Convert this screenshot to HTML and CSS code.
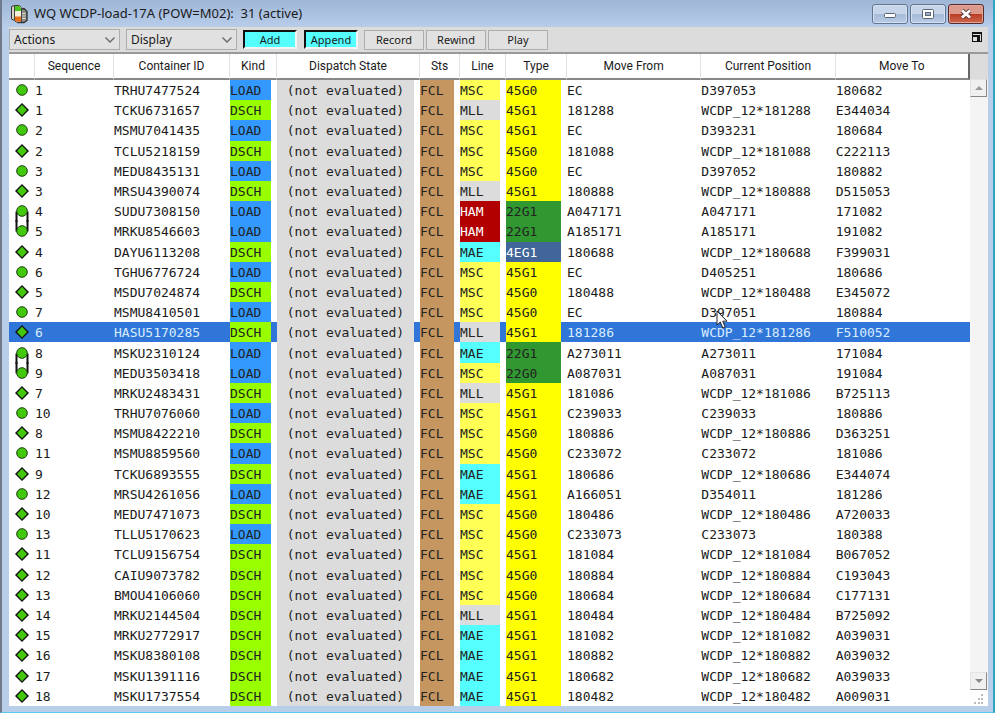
FILE: index.html
```html
<!DOCTYPE html>
<html lang="en">
<head>
    <meta charset="UTF-8">
    <meta name="viewport" content="width=device-width, initial-scale=1.0">
    <title>WQ WCDP-load-17A</title>
    <link rel="stylesheet" href="styles.css">
</head>
<body>
    <div class="window">
        <header class="titlebar">
            <svg class="app-icon" width="18" height="20" viewBox="0 0 18 20">
                <path d="M1.500 2.500l3-1v15l-3-1.500z" fill="#d8d6c8" stroke="#333"/>
                <path d="M9 5.500l5-1 3 3v9L14 18.500H8z" fill="#8f8f88" stroke="#333" stroke-width="1.400"/>
                <path d="M11.500 9.500h4M11.500 12h4M11.500 14.500h4" stroke="#d8d8d0"/>
                <path d="M4.500 1.500h5l2 2V18H6l-1.500-1.500z" fill="#f4f0dc" stroke="#444"/>
                <path d="M5 2h4.500l1.500 2v3H5z" fill="#4ec421"/>
                <path d="M5 12.500h6v5H6l-1-1z" fill="#e8701a"/>
            </svg>
            <h1>WQ WCDP-load-17A (POW=M02):&nbsp; 31 (active)</h1>
            <div class="window-buttons">
                <button type="button" class="win-btn" aria-label="Minimize">
                    <svg width="14" height="12" viewBox="0 0 14 12"><rect x="1.500" y="5.500" width="11" height="4" rx="1" fill="#fff" stroke="#5a6472"/></svg>
                </button>
                <button type="button" class="win-btn" aria-label="Maximize">
                    <svg width="14" height="12" viewBox="0 0 14 12"><rect x="1.500" y="1.500" width="11" height="9" rx="1" fill="#fff" stroke="#5a6472"/><rect x="4.500" y="4.500" width="5" height="3" fill="#9fb4cf" stroke="#5a6472"/></svg>
                </button>
                <button type="button" class="win-btn win-close" aria-label="Close">
                    <svg width="14" height="12" viewBox="0 0 14 12"><path d="M3 2.500l8 7M11 2.500l-8 7" stroke="#5c3a3a" stroke-width="4.500"/><path d="M3 2.500l8 7M11 2.500l-8 7" stroke="#fff" stroke-width="2.800"/></svg>
                </button>
            </div>
        </header>

        <div class="client">
            <div class="toolbar">
                <div class="dropdown">
                    <select aria-label="Actions"><option>Actions</option></select>
                    <svg width="10" height="6" viewBox="0 0 10 6"><path d="M.5.5L5 5 9.500.5" fill="none" stroke="#666" stroke-width="1.300"/></svg>
                </div>
                <div class="dropdown">
                    <select aria-label="Display"><option>Display</option></select>
                    <svg width="10" height="6" viewBox="0 0 10 6"><path d="M.5.5L5 5 9.500.5" fill="none" stroke="#666" stroke-width="1.300"/></svg>
                </div>
                <div class="toggles">
                    <button type="button" class="toggle" aria-pressed="true">Add</button>
                    <button type="button" class="toggle" aria-pressed="true">Append</button>
                </div>
                <div class="commands">
                    <button type="button" class="command">Record</button>
                    <button type="button" class="command">Rewind</button>
                    <button type="button" class="command">Play</button>
                </div>
                <button type="button" class="restore" aria-label="Restore pane">
                    <svg width="10" height="10" viewBox="0 0 10 10"><path d="M0 0h10v10H0z" fill="#111"/><path d="M1 2.500h7.500V9" fill="none" stroke="#ddd"/><path d="M1 5h4v4H1z" fill="#ddd"/></svg>
                </button>
            </div>

            <div class="list">
                <table class="queue">
                    <colgroup>
                        <col class="col-mark">
                        <col class="col-seq">
                        <col class="col-id">
                        <col class="col-kind">
                        <col class="col-state">
                        <col class="col-sts">
                        <col class="col-line">
                        <col class="col-type">
                        <col><col><col>
                    </colgroup>
                    <thead>
                        <tr>
                            <th></th>
                            <th>Sequence</th>
                            <th>Container ID</th>
                            <th>Kind</th>
                            <th>Dispatch State</th>
                            <th>Sts</th>
                            <th>Line</th>
                            <th>Type</th>
                            <th>Move From</th>
                            <th>Current Position</th>
                            <th>Move To</th>
                        </tr>
                    </thead>
                    <tbody id="rows"></tbody>
                </table>
                <div class="scrollbar">
                    <div class="scroll-head"></div>
                    <button type="button" class="scroll-btn" aria-label="Scroll up">
                        <svg width="8" height="4" viewBox="0 0 8 4"><path d="M0 4l4-4 4 4z" fill="#999"/></svg>
                    </button>
                    <div class="scroll-track"></div>
                    <button type="button" class="scroll-btn" aria-label="Scroll down">
                        <svg width="8" height="4" viewBox="0 0 8 4"><path d="M0 0h8L4 4z" fill="#888"/></svg>
                    </button>
                    <svg class="grip" width="18" height="16" viewBox="0 0 18 16">
                        <path d="M11 4h2v2h-2zM8 8h2v2H8zM11 8h2v2h-2zM4 12h2v2H4zM8 12h2v2H8zM11 12h2v2h-2z" fill="#bbb"/>
                    </svg>
                </div>
            </div>
        </div>

        <svg class="pointer" width="13" height="20" viewBox="0 0 13 20">
            <path d="M1 1v14l3.300-3 2.500 6 2.400-1-2.500-5.800H11z" fill="#fff" stroke="#222"/>
        </svg>
    </div>

    <script>
        // kind, sequence, container, line, type, from, position, to, flag
        const moves = [
            ['load', 1, 'TRHU7477524', 'MSC', '45G0', 'EC', 'D397053', '180682'],
            ['dsch', 1, 'TCKU6731657', 'MLL', '45G1', '181288', 'WCDP_12*181288', 'E344034'],
            ['load', 2, 'MSMU7041435', 'MSC', '45G1', 'EC', 'D393231', '180684'],
            ['dsch', 2, 'TCLU5218159', 'MSC', '45G0', '181088', 'WCDP_12*181088', 'C222113'],
            ['load', 3, 'MEDU8435131', 'MSC', '45G0', 'EC', 'D397052', '180882'],
            ['dsch', 3, 'MRSU4390074', 'MLL', '45G1', '180888', 'WCDP_12*180888', 'D515053'],
            ['load', 4, 'SUDU7308150', 'HAM', '22G1', 'A047171', 'A047171', '171082', 'first'],
            ['load', 5, 'MRKU8546603', 'HAM', '22G1', 'A185171', 'A185171', '191082', 'second'],
            ['dsch', 4, 'DAYU6113208', 'MAE', '4EG1', '180688', 'WCDP_12*180688', 'F399031'],
            ['load', 6, 'TGHU6776724', 'MSC', '45G1', 'EC', 'D405251', '180686'],
            ['dsch', 5, 'MSDU7024874', 'MSC', '45G0', '180488', 'WCDP_12*180488', 'E345072'],
            ['load', 7, 'MSMU8410501', 'MSC', '45G0', 'EC', 'D397051', '180884'],
            ['dsch', 6, 'HASU5170285', 'MLL', '45G1', '181286', 'WCDP_12*181286', 'F510052', 'selected'],
            ['load', 8, 'MSKU2310124', 'MAE', '22G1', 'A273011', 'A273011', '171084', 'first'],
            ['load', 9, 'MEDU3503418', 'MSC', '22G0', 'A087031', 'A087031', '191084', 'second'],
            ['dsch', 7, 'MRKU2483431', 'MLL', '45G1', '181086', 'WCDP_12*181086', 'B725113'],
            ['load', 10, 'TRHU7076060', 'MSC', '45G1', 'C239033', 'C239033', '180886'],
            ['dsch', 8, 'MSMU8422210', 'MSC', '45G0', '180886', 'WCDP_12*180886', 'D363251'],
            ['load', 11, 'MSMU8859560', 'MSC', '45G0', 'C233072', 'C233072', '181086'],
            ['dsch', 9, 'TCKU6893555', 'MAE', '45G1', '180686', 'WCDP_12*180686', 'E344074'],
            ['load', 12, 'MRSU4261056', 'MAE', '45G1', 'A166051', 'D354011', '181286'],
            ['dsch', 10, 'MEDU7471073', 'MSC', '45G0', '180486', 'WCDP_12*180486', 'A720033'],
            ['load', 13, 'TLLU5170623', 'MSC', '45G0', 'C233073', 'C233073', '180388'],
            ['dsch', 11, 'TCLU9156754', 'MSC', '45G1', '181084', 'WCDP_12*181084', 'B067052'],
            ['dsch', 12, 'CAIU9073782', 'MSC', '45G0', '180884', 'WCDP_12*180884', 'C193043'],
            ['dsch', 13, 'BMOU4106060', 'MSC', '45G0', '180684', 'WCDP_12*180684', 'C177131'],
            ['dsch', 14, 'MRKU2144504', 'MLL', '45G1', '180484', 'WCDP_12*180484', 'B725092'],
            ['dsch', 15, 'MRKU2772917', 'MAE', '45G1', '181082', 'WCDP_12*181082', 'A039031'],
            ['dsch', 16, 'MSKU8380108', 'MAE', '45G1', '180882', 'WCDP_12*180882', 'A039032'],
            ['dsch', 17, 'MSKU1391116', 'MAE', '45G1', '180682', 'WCDP_12*180682', 'A039033'],
            ['dsch', 18, 'MSKU1737554', 'MAE', '45G1', '180482', 'WCDP_12*180482', 'A009031']
        ];

        const circle = '<circle cx="8" cy="10" r="5.3" fill="#43c80b" stroke="#173d0c"/>';
        const diamond = '<path d="M8 3l7 7-7 7-7-7z" fill="#111"/><path d="M8 4.800L13 10l-5 5.200L3 10z" fill="#43c80b"/>';
        // twin lifts: two circles joined by a pair of rails
        const rails = {
            first: '<path d="M2.500 21V11.500H13.500V21" fill="none" stroke="#111" stroke-width="2"/>',
            second: '<path d="M2.500-1V9.500H13.500V-1" fill="none" stroke="#111" stroke-width="2"/>'
        };

        function mark(kind, flag) {
            const shape = kind === 'load' ? circle : diamond;
            return `<svg class="mark" width="16" height="20" viewBox="0 0 16 20">${rails[flag] || ''}${shape}</svg>`;
        }

        document.getElementById('rows').innerHTML = moves.map(([kind, seq, id, line, type, from, pos, to, flag]) => `
            <tr class="${flag === 'selected' ? 'selected' : ''}">
                <td class="mark-cell">${mark(kind, flag)}</td>
                <td>${seq}</td>
                <td>${id}</td>
                <td class="fill kind-${kind}">${kind.toUpperCase()}</td>
                <td class="fill state">(not evaluated)</td>
                <td class="fill sts">FCL</td>
                <td class="fill line-${line.toLowerCase()}">${line}</td>
                <td class="fill type-${type.slice(0, 2).toLowerCase()}">${type}</td>
                <td>${from}</td>
                <td>${pos}</td>
                <td>${to}</td>
            </tr>`).join('');
    </script>
</body>
</html>
```

FILE: styles.css
```css
:root {
    --frame: #b9cee9;
    --face: #dcdcdc;
    --select: #2f76d8;
}

* {
    box-sizing: border-box;
}

body {
    margin: 0;
    font-family: "Noto Sans", "Open Sans", sans-serif;
    color: #1a1a1a;
}

.window {
    position: relative;
    display: flex;
    flex-direction: column;
    min-height: 100vh;
    padding: 0 5px 6px 7px;
    background: var(--frame);
    border-left: 2px solid #6f7a8c;
    border-right: 2px solid #2ba5c4;
    border-bottom: 1px solid #5cc9ee;
}

.titlebar {
    display: flex;
    align-items: center;
    height: 27px;
    margin: 0 -5px 0 -7px;
    padding: 0 9px 0 8px;
    background: linear-gradient(#9fb6d6, #b7cdea);
}

.titlebar h1 {
    flex: 1;
    margin: 0;
    padding-left: 6px;
    font-size: 13px;
    font-weight: 400;
    line-height: 27px;
}

.window-buttons {
    display: flex;
    gap: 2px;
}

button {
    margin: 0;
    padding: 0;
    font-family: inherit;
    color: inherit;
}

.win-btn {
    display: flex;
    align-items: center;
    justify-content: center;
    width: 36px;
    height: 20px;
    border: 1px solid #5f7590;
    border-radius: 3px;
    background: linear-gradient(#c6d5e9 50%, #a5bad6 50%, #b8cce6);
    box-shadow: inset 0 0 0 1px #d5e1f0;
}

.win-close {
    border-color: #5a2a2a;
    background: linear-gradient(#dc9a8c 50%, #b83a22 50%, #cf6a50);
    box-shadow: inset 0 0 0 1px #e0a698;
}

.client {
    flex: 1;
    display: flex;
    flex-direction: column;
    background: #fff;
}

.toolbar {
    display: flex;
    align-items: center;
    gap: 6px;
    height: 27px;
    padding-right: 6px;
    background: var(--face);
    border-bottom: 2px solid #999;
}

.dropdown {
    display: flex;
    align-items: center;
    width: 111px;
    height: 21px;
    background: #e1e1e1;
    border: 1px solid #adadad;
}

.dropdown select {
    flex: 1;
    height: 100%;
    margin-right: -15px;
    padding: 0 0 0 4px;
    appearance: none;
    background: none;
    border: 0;
    font-family: inherit;
    font-size: 12px;
    color: inherit;
}

.dropdown svg {
    margin-right: 4px;
    pointer-events: none;
}

.toggles {
    display: flex;
    gap: 7px;
}

.toggle {
    width: 54px;
    height: 19px;
    background: #55ffff;
    border: 2px solid;
    border-color: #111 #f4f4f4 #f4f4f4 #111;
    font-size: 11px;
    line-height: 15px;
}

.commands {
    display: flex;
    gap: 2px;
}

.command {
    width: 60px;
    height: 20px;
    background: #e1e1e1;
    border: 1px solid #adadad;
    font-size: 11px;
    line-height: 16px;
}

.restore {
    display: flex;
    margin-left: auto;
    padding-bottom: 5px;
    background: none;
    border: 0;
}

.list {
    flex: 1;
    display: flex;
}

.queue {
    flex: 1;
    width: 0;
    table-layout: fixed;
    border-spacing: 0;
}

.col-mark { width: 26px; }
.col-seq { width: 79px; }
.col-id { width: 116px; }
.col-kind { width: 47px; }
.col-state { width: 143px; }
.col-sts { width: 40px; }
.col-line { width: 46px; }
.col-type { width: 61px; }

.queue th {
    height: 26px;
    padding: 1px 0 0;
    border-right: 1px solid #e2e2e2;
    border-bottom: 2px solid #888;
    font-family: Roboto, "Liberation Sans", sans-serif;
    font-size: 12px;
    font-weight: 400;
    line-height: 23px;
    white-space: nowrap;
}

.queue th:last-child {
    border-right: 2px solid #666;
}

.queue td {
    padding: 2px 0 0;
    font-family: "DejaVu Sans Mono", monospace;
    font-size: 13px;
    line-height: 18px;
    white-space: nowrap;
}

.queue .mark-cell {
    padding: 0 0 0 5px;
    line-height: 0;
}

.mark {
    display: block;
    overflow: visible;
}

.queue .fill {
    border-right: 6px solid transparent;
    background-clip: padding-box;
    color: #222;
}

.kind-load { background-color: #3399ff; }
.kind-dsch { background-color: #99ff00; }
.sts { background-color: #c69660; }

.state {
    background-color: #dcdcdc;
    text-align: center;
}

.line-msc { background-color: #ffff55; }
.line-mll { background-color: #dcdcdc; }
.line-mae { background-color: #55ffff; }
.queue .line-ham { background-color: #b20000; color: #fff; }

.type-45 { background-color: #ffff00; }
.type-22 { background-color: #319831; }
.queue .type-4e { background-color: #416699; color: #fff; }

.selected {
    background: var(--select);
    color: #d9ecff;
}

.scrollbar {
    display: flex;
    flex-direction: column;
    width: 18px;
    background: #f4f4f4;
}

.scroll-head {
    height: 25px;
    background: var(--face);
}

.scroll-btn {
    display: flex;
    align-items: center;
    justify-content: center;
    height: 18px;
    margin-right: 1px;
    background: #f0f0f0;
    border: 1px solid;
    border-color: #e3e3e3 #888 #888 #e3e3e3;
}

.scroll-track {
    flex: 1;
}

.grip {
    background: #fff;
}

.pointer {
    position: absolute;
    left: 714px;
    top: 310px;
}
```
